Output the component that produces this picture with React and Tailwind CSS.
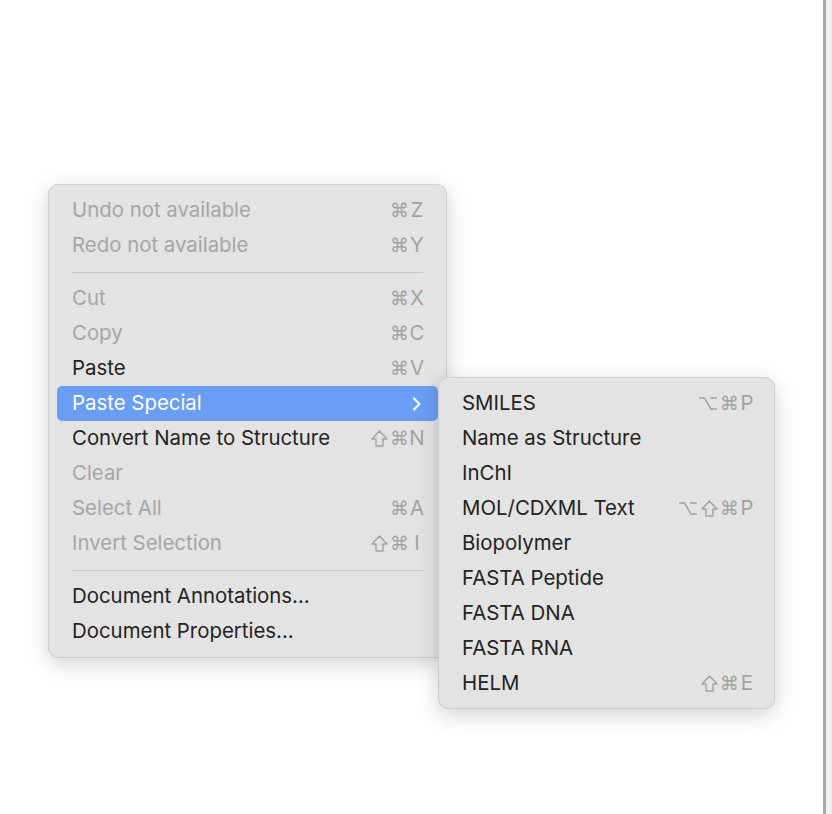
import React from 'react';

const mainItems = [
  { label: 'Undo not available', mods: '⌘', key: 'Z', disabled: true },
  { label: 'Redo not available', mods: '⌘', key: 'Y', disabled: true },
  { sep: true },
  { label: 'Cut', mods: '⌘', key: 'X', disabled: true },
  { label: 'Copy', mods: '⌘', key: 'C', disabled: true },
  { label: 'Paste', mods: '⌘', key: 'V' },
  { label: 'Paste Special', submenu: true, active: true },
  { label: 'Convert Name to Structure', mods: '⇧⌘', key: 'N' },
  { label: 'Clear', disabled: true },
  { label: 'Select All', mods: '⌘', key: 'A', disabled: true },
  { label: 'Invert Selection', mods: '⇧⌘', key: 'I', disabled: true },
  { sep: true },
  { label: 'Document Annotations...' },
  { label: 'Document Properties...' },
];

const subItems = [
  { label: 'SMILES', mods: '⌥⌘', key: 'P' },
  { label: 'Name as Structure' },
  { label: 'InChI' },
  { label: 'MOL/CDXML Text', mods: '⌥⇧⌘', key: 'P' },
  { label: 'Biopolymer' },
  { label: 'FASTA Peptide' },
  { label: 'FASTA DNA' },
  { label: 'FASTA RNA' },
  { label: 'HELM', mods: '⇧⌘', key: 'E' },
];

const Chevron = () => (
  <svg width="10" height="16" viewBox="0 0 10 16" fill="none">
    <path d="M2 2.5 L7.5 8 L2 13.5" stroke="white" strokeWidth="2" strokeLinecap="round" strokeLinejoin="round" />
  </svg>
);

// outline shift arrow, drawn because the font glyph comes out too small
const Shift = () => (
  <svg width="19" height="19" viewBox="0 0 19 19" fill="none" className="mr-[1px]">
    <path d="M9.5 2 L17 10 H13 V17 H6 V10 H2 Z" stroke="#a2a2a2" strokeWidth="1.4" strokeLinejoin="round" />
  </svg>
);

const Option = () => (
  <svg width="20" height="19" viewBox="0 0 20 19" fill="none" className="mr-[2px]">
    <path d="M1 4 H6.5 L13 15 H19 M12 4 H19" stroke="#a2a2a2" strokeWidth="1.5" />
  </svg>
);

const Mods = ({ mods }) => (
  <span className="flex items-center">
    {mods.split('').map((m, i) =>
      m === '⇧' ? (
        <Shift key={i} />
      ) : m === '⌥' ? (
        <Option key={i} />
      ) : (
        <span key={i} className="font-['DejaVu_Sans'] text-[19px] leading-none">
          {m}
        </span>
      )
    )}
  </span>
);

const MenuRow = ({ item, pr }) => {
  if (item.sep) {
    return (
      <div className="h-[18px] flex items-center pl-[15px] pr-[15px]">
        <div className="h-px w-full bg-[#c9c9c9]" />
      </div>
    );
  }
  const textColor = item.active ? 'text-white' : item.disabled ? 'text-[#a6a6a6]' : 'text-[#232323]';
  return (
    <div
      className={`h-[35px] flex items-center justify-between pl-[15px] rounded-[5px] ${pr} ${
        item.active ? 'bg-[#6a9ef5]' : ''
      } ${textColor}`}
    >
      <span className="whitespace-nowrap">{item.label}</span>
      {item.submenu && (
        <span className="pr-[3px] flex items-center">
          <Chevron />
        </span>
      )}
      {item.key && (
        <span className="flex items-center text-[#a2a2a2]">
          <Mods mods={item.mods} />
          <span className="w-[16px] text-center">{item.key}</span>
        </span>
      )}
    </div>
  );
};

const Menu = ({ items, className, pr }) => (
  <div
    className={`absolute bg-[#e3e3e3] border border-[#cdcdcd] rounded-[10px] px-[8px] shadow-[0_6px_22px_rgba(0,0,0,0.18)] ${className}`}
  >
    {items.map((item, i) => (
      <MenuRow key={i} item={item} pr={pr} />
    ))}
  </div>
);

export default function App() {
  return (
    <div className="w-[832px] h-[814px] flex bg-white overflow-hidden font-['Inter','Liberation_Sans',sans-serif] text-[20.4px]">
      <div className="relative flex-1">
        <Menu items={mainItems} pr="pr-[13px]" className="left-[48px] top-[184px] w-[399px] pt-[8px] pb-[8px]" />
        <Menu items={subItems} pr="pr-[11px]" className="left-[438px] top-[377px] w-[337px] pt-[8px] pb-[7px]" />
      </div>
      <div className="w-[3px] bg-[#a7a8ad]" />
      <div className="w-[6px] bg-[#f2f2f2]" />
    </div>
  );
}
